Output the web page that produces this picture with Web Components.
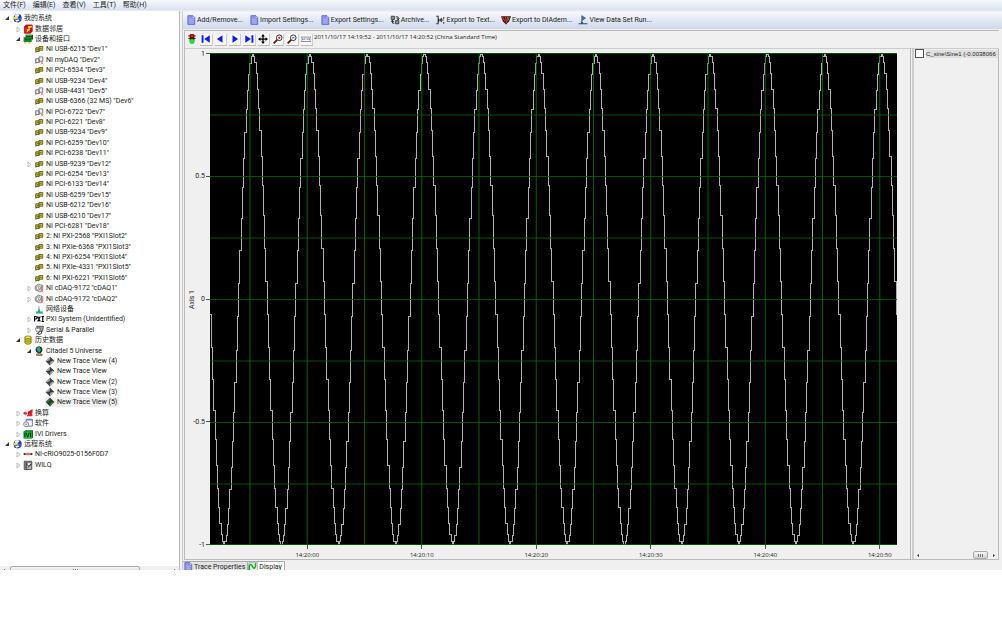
<!DOCTYPE html>
<html lang="zh-CN">
<head>
<meta charset="utf-8">
<title>Measurement &amp; Automation Explorer</title>
<style>
  body {
    margin: 0;
    background: #fff;
    color: #1c1c1c;
    font: 7px/10px Roboto, "Noto Sans CJK SC", sans-serif;
  }
</style>
</head>
<body>
<max-app></max-app>

<script>
const icons = {
  system: '<circle cx="9" cy="8" r="6.500" fill="#1a35d8"/><path d="M4 4q4-4 8-1l-2 3-4 1zM9 9l4-1 1 3-3 3z" fill="#e8f0ff"/><path d="M1 7l6-2 5 4-6 3z" fill="#f2e233"/><path d="M3 11l9-3 3 4-5 3-6-1z" fill="#2246a0"/><path d="M5 12l5-2 2 2-5 2z" fill="#fff"/>',
  neighborhood: '<path d="M2 4l4-3h9v11l-3 3H2z" fill="#7a0c10"/><path d="M2 4h10v11H2z" fill="#e8141c"/><path d="M5 1h10v11h-3V4H2z" fill="#c80f16"/><path d="M8 3h6v3h-3v4l-5 3V8h3z" fill="#ffe52e"/>',
  devices: '<path d="M4 1h12v8H4z" fill="#0c5c1e"/><path d="M1 5h13v8H1z" fill="#168c32"/><path d="M3 7h4v3H3zM9 7h3v3H9z" fill="#0a4c1a"/><path d="M2 13h3v2H2zM8 13h4v2H8z" fill="#d8c848"/><path d="M5 2h9v1H5z" fill="#63c77a"/>',
  card: '<path d="M3 6v8M8 6v7" stroke="#555" stroke-width="1.3"/><path d="M3 6h5v6H3zM8 4h6v6H8z" fill="#cfca2c" stroke="#55551c" stroke-width="1.3"/><path d="M5 8h2v2H5zM10 6h2v2h-2z" fill="#6b6a18"/>',
  offline: '<path d="M3 6v8M8 6v7" stroke="#666" stroke-width="1.3"/><path d="M3 6h5v6H3zM8 3h6v7H8z" fill="#f2f2f2" stroke="#666" stroke-width="1.3"/><path d="M11 11l4 4M15 11l-4 4" stroke="#f46a6a" stroke-width="1.3"/>',
  chassis: '<path d="M2 5l5-3 7 2v7l-5 3-7-3z" fill="#f2f2f2" stroke="#666" stroke-width="1.2"/><circle cx="7" cy="8" r="3.500" fill="#fff" stroke="#555"/><path d="M7 6v3l3 1M12 4v7" stroke="#555" fill="none"/><path d="M11 11l4 4M15 11l-4 4" stroke="#f46a6a" stroke-width="1.3"/>',
  network: '<path d="M8 3v8" stroke="#6cb6a8" stroke-width="1.5"/><path d="M8 6l2 6h4v3H3v-3h3z" fill="#2ba76c"/><path d="M3 14h11v1H3z" fill="#42c5d8"/>',
  pxi: '<path d="M1 12V4h2q2 0 2 2t-2 2H1M6 4l4 8M10 4l-4 8M14 4v8M12 4h4M12 12h4" fill="none" stroke="#000" stroke-width="1.8"/>',
  serial: '<path d="M4 2h11l-1 8H8z" fill="#999" stroke="#444" stroke-width="1.2"/><path d="M2 5h8l-1 6H4z" fill="#eee" stroke="#555"/><path d="M8 10q1 4-4 4M12 10v3q0 2-5 2" stroke="#333" fill="none" stroke-width="1.5"/>',
  history: '<path d="M3 3v10q5 4 10 0V3z" fill="#e9d91c" stroke="#5b5405"/><ellipse cx="8" cy="3.500" rx="5" ry="2" fill="#fff475" stroke="#5b5405"/><path d="M3 7q5 3 10 0M3 10q5 3 10 0" stroke="#5b5405" fill="none"/>',
  universe: '<circle cx="8" cy="6" r="5" fill="#1730c8" stroke="#222"/><path d="M5 3l4-2 3 4-3 5-4-3z" fill="#2fb24b"/><path d="M10 2q4 4 0 9" fill="none" stroke="#111" stroke-width="1.2"/><path d="M7 11h3v2h3v2H4v-2h3z" fill="#d9b51d" stroke="#443"/>',
  trace: '<path d="M8 1l7 7-7 7-7-7z" fill="#888"/><path d="M8 1v7H1zM8 8h7l-7 7z" fill="#aaa"/><path d="M8 1l7 7H8zM1 8h7v7z" fill="#444"/><path d="M5 8h6M8 5v6" stroke="#222"/>',
  traceOpen: '<path d="M8 1l7 7-7 7-7-7z" fill="#293b2b"/><path d="M8 1v7H1zM8 8h7l-7 7z" fill="#58705b"/><path d="M5 8h6M8 5v6" stroke="#0d4e15" stroke-width="2"/>',
  scale: '<path d="M0 8l4-3v2h3v3H4v2z" fill="#c9242b"/><path d="M15 2v11H6l3-5z" fill="#ee242c"/><path d="M8 6l7-4v4l-7 4z" fill="#c9141d"/>',
  software: '<path d="M5 2h10v11H5z" fill="#fff" stroke="#4257a0" stroke-width="1.2"/><path d="M5 2h10v2H5z" fill="#5a75c8"/><circle cx="5" cy="10" r="4" fill="#f0ecf8" stroke="#75669a" stroke-width="1.3"/><circle cx="5" cy="10" r="1.200" fill="#75669a"/>',
  ivi: '<path d="M1 4l3-2h12v11l-2 2H1z" fill="#0a6e1e"/><path d="M1 4h13v11H1z" fill="#17bd3a"/><path d="M3 6v7M5 6l2.500 7 2.500-7M12 6v7" stroke="#032d0a" stroke-width="1.6" fill="none"/>',
  rio: '<path d="M0 8l3-2v1h2v2H3v1zM16 8l-3-2v1h-2v2h2v1z" fill="#222"/><path d="M5 6l3 4M8 6l-3 4M8 6l3 4M11 6l-3 4" stroke="#e5393e" stroke-width="1.3"/>',
  pc: '<path d="M2 2h12v13H2z" fill="#bbb" stroke="#444" stroke-width="1.5"/><path d="M5 3v11" stroke="#333" stroke-width="2"/><path d="M7 4h6v5H7z" fill="#eee" stroke="#444"/><path d="M8 12l5-6" stroke="#333" stroke-width="1.5"/>',
  doc: '<path d="M3 1h8l3 3v11H3z" fill="#8d96f0" stroke="#5560c4" stroke-width="1.3"/><path d="M10 1v4h4" fill="#fff" stroke="#5560c4"/><path d="M5 7h7M5 10h7M5 13h7" stroke="#b9c0fa"/>',
  archive: '<path d="M2 2h5v5H2zM9 9h5v5H9z" fill="#999" stroke="#333" stroke-width="1.4"/><path d="M9 3h4v4M11 5l2 3 2-3M7 13H4V9M2 11l2-3 2 3" fill="none" stroke="#222" stroke-width="1.4"/>',
  text: '<path d="M2 2h3v12H2M6 6v5M8 8h6M11 5L8 8l3 3M14 3v3M14 11v3" fill="none" stroke="#333" stroke-width="1.7"/>',
  diadem: '<path d="M0 2h16l-3 8-5 5-5-5z" fill="#301014"/><path d="M2 3l4 7M7 3l2 10M13 3l-3 7" stroke="#e32632" stroke-width="2"/><path d="M10 3l2 5" stroke="#32a84d" stroke-width="2"/>',
  run: '<path d="M6 1l6 4-6 4z" fill="#397fae" stroke="#264373"/><path d="M6 9v4M1 14h14M5 12h3" stroke="#264373" fill="none" stroke-width="1.7"/>',
  light: '<path d="M5 1h6v11H5zM2 3h12M2 7h12" fill="#431313" stroke="#431313" stroke-width="1.5"/><circle cx="8" cy="3" r="2.500" fill="#d91818"/><circle cx="8" cy="12" r="4" fill="#12e82b"/>',
  first: '<path d="M1 2h3v12H1zM14 2v12L5 8z" fill="#0b1df0"/>',
  prev: '<path d="M12 2v12L3 8z" fill="#0b1df0"/>',
  next: '<path d="M4 2v12l9-6z" fill="#0b1df0"/>',
  last: '<path d="M2 2v12l9-6zM12 2h3v12h-3z" fill="#0b1df0"/>',
  move: '<path d="M8 2v12M2 8h12" stroke="#000" stroke-width="2"/><path d="M8 0l3 4H5zM8 16l3-4H5zM0 8l4-3v6zM16 8l-4-3v6z"/>',
  zoomIn: '<path d="M7 9l-6 6" stroke="#641515" stroke-width="3"/><circle cx="10" cy="6" r="4.500" fill="#fff" stroke="#333" stroke-width="1.6"/><path d="M8 6h4M10 4v4" stroke="#e21717" stroke-width="1.5"/>',
  zoomOut: '<path d="M7 9l-6 6" stroke="#641515" stroke-width="3"/><circle cx="10" cy="6" r="4.500" fill="#fff" stroke="#333" stroke-width="1.6"/><path d="M8 6h4" stroke="#1734e2" stroke-width="1.5"/>',
  range: '<path d="M0 5h16v7H0z" fill="#fff" stroke="#555"/><path d="M3 7v3M13 7v3M5 8h2M9 8h2" stroke="#223b91" stroke-width="1.5"/>',
  chart: '<path d="M1 1h14v14H1z" fill="#e4f4e5" stroke="#999"/><path d="M2 14V7q2-6 5 0t5 0V2" stroke="#15a829" stroke-width="2.500" fill="none"/>'
};

class MaxElement extends HTMLElement {
  constructor() {
    super();
    this.attachShadow({ mode: 'open' });
  }

  connectedCallback() {
    this.shadowRoot.innerHTML = this.render();
  }
}

class MaxIcon extends MaxElement {
  render() {
    return `
      <style>
        :host { display: block; flex: none; width: 10px; height: 10px; }
        svg { display: block; width: 100%; height: 100%; }
      </style>
      <svg viewBox="0 0 16 16" aria-hidden="true">${icons[this.getAttribute('name')]}</svg>`;
  }
}

class MenuBar extends MaxElement {
  render() {
    return `
      <style>
        :host {
          display: flex;
          gap: 7px;
          padding: 0 3px;
          height: 11px;
          box-sizing: border-box;
          background: linear-gradient(#f6f8fc, #dae1f1);
          border-bottom: 1px solid #e9ebf0;
        }
      </style>
      <slot></slot>`;
  }
}

class MenuItem extends MaxElement {
  render() {
    return `
      <style>
        :host { display: block; }
        button { display: block; border: 0; padding: 0; background: none; font: inherit; color: inherit; white-space: nowrap; }
      </style>
      <button type="button"><slot></slot></button>`;
  }
}

class TreeView extends MaxElement {
  render() {
    return `
      <style>
        :host {
          display: grid;
          flex: 1;
          grid-auto-rows: 1fr;
          min-height: 0;
          padding: 2px 0 96px;
          box-sizing: border-box;
          background: #fff;
        }
      </style>
      <slot></slot>`;
  }
}

class TreeItem extends MaxElement {
  render() {
    const level = Number(this.getAttribute('level'));
    const state = this.getAttribute('state');
    const arrows = {
      open: '<path d="M6 2v4H2z" fill="#333"/>',
      closed: '<path d="M3 2l3 2.500-3 2.500z" fill="#fff" stroke="#bbb"/>'
    };
    return `
      <style>
        :host { display: flex; align-items: center; min-height: 0; padding-left: ${3 + level * 11}px; }
        svg { flex: none; width: 8px; height: 8px; margin-right: 1px; }
        .label { display: flex; align-items: center; height: 10px; padding-right: 2px; white-space: nowrap; border-radius: 2px; }
        .label span { margin-left: 2px; }
        :host([selected]) .label { background: #efefef; }
      </style>
      <svg viewBox="0 0 8 8" aria-hidden="true">${arrows[state] || ''}</svg>
      <div class="label">
        <max-icon name="${this.getAttribute('icon')}"></max-icon>
        <span><slot></slot></span>
      </div>`;
  }
}

class ScrollBar extends MaxElement {
  render() {
    return `
      <style>
        :host { display: flex; align-items: center; height: 8px; flex: none; background: #f0f0f0; }
        svg { flex: none; width: 7px; height: 7px; fill: #333; }
        .track { display: flex; flex: 1; height: 100%; justify-content: var(--thumb-side, flex-start); }
        .thumb {
          display: flex;
          align-items: center;
          justify-content: center;
          gap: 1px;
          box-sizing: border-box;
          width: var(--thumb, 20%);
          margin: 0 3px;
          border: 1px solid #aaa;
          border-radius: 2px;
          background: linear-gradient(#f6f6f6, #d2d2d2);
        }
        i { width: 1px; height: 3px; background: #777; }
      </style>
      <svg viewBox="0 0 7 7"><path d="M5 2v3L3 3.500z"/></svg>
      <div class="track"><div class="thumb"><i></i><i></i><i></i></div></div>
      <svg viewBox="0 0 7 7"><path d="M2 2v3l2-1.500z"/></svg>`;
  }
}

class ToolBar extends MaxElement {
  render() {
    return `
      <style>
        :host {
          display: flex;
          align-items: center;
          gap: 6px;
          height: 16px;
          padding: 0 3px;
          margin-top: 1px;
          background: linear-gradient(#f7f9fd, #e2e8f5 50%, #d1daec);
          border-bottom: 1px solid #d4d8e0;
        }
      </style>
      <slot></slot>`;
  }
}

class ToolButton extends MaxElement {
  render() {
    return `
      <style>
        :host { display: block; flex: none; }
        button { display: flex; align-items: center; gap: 1px; border: 0; padding: 0; background: none; font: inherit; color: inherit; white-space: nowrap; }
      </style>
      <button type="button"><max-icon name="${this.getAttribute('icon')}"></max-icon><span><slot></slot></span></button>`;
  }
}

class PlotTools extends MaxElement {
  render() {
    const tools = ['light', 'first', 'prev', 'next', 'last', 'move', 'zoomIn', 'zoomOut', 'range'];
    return `
      <style>
        :host { display: flex; height: 17px; border-bottom: 1px solid #ccc; background: #f0f0f0; }
        .tools { display: grid; grid-template-columns: repeat(9, 1fr); align-items: center; flex: none; width: 129px; }
        button {
          display: flex;
          justify-content: center;
          align-items: center;
          height: 12px;
          margin: 0 1px;
          padding: 0;
          border: 0;
          border-right: 1px solid #ccc;
          border-bottom: 1px solid #bbb;
          background: #f8f8f8;
        }
        button:first-child { border-color: transparent; background: none; }
        span { font: 6px/12px "Open Sans", sans-serif; white-space: nowrap; }
      </style>
      <div class="tools">
        ${tools.map((t) => `<button type="button" aria-label="${t}"><max-icon name="${t}"></max-icon></button>`).join('')}
      </div>
      <span><slot></slot></span>`;
  }
}

class TracePlot extends MaxElement {
  // one cycle every five seconds, held between samples
  tracePath() {
    const period = 57.17;
    const step = period / 46;
    let d = '';
    for (let x = 0; x <= 687; x += step) {
      const y = 246 - 245 * Math.cos((2 * Math.PI * (x - 42.3)) / period);
      d += d ? `H${x.toFixed(1)}V${y.toFixed(1)}` : `M0 262V${y.toFixed(1)}`;
    }
    return d;
  }

  render() {
    let across = '';
    let down = '';
    for (let i = 0; i <= 8; i++) {
      across += `M0 ${Math.min(i * 61.5 + 0.5, 491.5)}H687`;
    }
    for (let i = 0; i < 12; i++) {
      down += `M${40 + i * 57.25} 0V492`;
    }
    return `
      <style>
        :host {
          display: grid;
          grid-template: 1fr 14px / 13px 12px 1fr;
          flex: 1;
          min-width: 0;
          padding: 4px 13px 0 0;
          background: #f0f0f0;
        }
        .title { display: flex; align-items: center; justify-content: center; writing-mode: vertical-rl; transform: rotate(180deg); }
        .values { display: flex; flex-direction: column; justify-content: space-between; align-items: flex-end; }
        .values span { display: flex; align-items: center; gap: 1px; height: 1px; white-space: nowrap; }
        .values span::after { content: ""; width: 4px; height: 1px; background: #555; }
        svg { display: block; width: 100%; height: 100%; min-height: 0; background: #000; }
        path { fill: none; vector-effect: non-scaling-stroke; }
        .plot { min-width: 0; min-height: 0; display: grid; }
        .times { grid-column: 3; display: grid; grid-template-columns: repeat(6, 1fr); margin: 0 -40px 0 40px; }
        .times span { display: flex; flex-direction: column; align-items: center; gap: 1px; font: 6px/10px "Open Sans", sans-serif; }
        .times span::before { content: ""; width: 1px; height: 4px; background: #555; }
      </style>
      <div class="title">Axis 1</div>
      <div class="values"><span>1</span><span>0.5</span><span>0</span><span>-0.5</span><span>-1</span></div>
      <div class="plot">
        <svg viewBox="0 0 687 492" preserveAspectRatio="none" role="img" aria-label="Sine1">
          <path d="${this.tracePath()}" stroke="#b0b0b0" shape-rendering="crispEdges"/>
          <path d="${across}" stroke="#005c00" stroke-opacity=".9"/>
          <path d="${down}" stroke="#006a00" stroke-opacity=".9"/>
        </svg>
      </div>
      <div class="times"><span>14:20:00</span><span>14:20:10</span><span>14:20:20</span><span>14:20:30</span><span>14:20:40</span><span>14:20:50</span></div>`;
  }
}

class TraceLegend extends MaxElement {
  render() {
    return `
      <style>
        :host {
          display: flex;
          flex-direction: column;
          justify-content: space-between;
          width: 84px;
          flex: none;
          overflow: hidden;
          border-left: 2px solid #ccc;
          border-right: 1px solid #bbb;
          background: #f0f0f0;
          --thumb: 15px;
          --thumb-side: flex-end;
        }
        label { display: flex; align-items: center; height: 9px; gap: 2px; white-space: nowrap; font: 6px/8px "Liberation Sans", sans-serif; }
        input { appearance: none; box-sizing: border-box; flex: none; width: 9px; height: 9px; margin: 0 0 0 1px; border: 1px solid #555; background: #fff; }
        span { flex: 1; background: #e0e0e0; }
      </style>
      <label><input type="checkbox"><span><slot></slot></span></label>
      <scroll-bar></scroll-bar>`;
  }
}

class TabStrip extends MaxElement {
  render() {
    return `
      <style>
        :host { display: flex; height: 9px; flex: none; overflow: hidden; }
        button {
          display: flex;
          align-items: center;
          align-self: flex-start;
          gap: 1px;
          height: 12px;
          padding: 0 2px 0 0;
          border: 1px solid #aaa;
          border-left: 0;
          background: #e3e3e3;
          font: inherit;
          color: inherit;
          white-space: nowrap;
        }
        button[aria-selected="true"] { background: #fff; }
      </style>
      <button type="button" role="tab"><max-icon name="doc"></max-icon>Trace Properties</button>
      <button type="button" role="tab" aria-selected="true"><max-icon name="chart"></max-icon>Display</button>`;
  }
}

class MaxApp extends MaxElement {
  treeItems() {
    const rows = [
      [0, 'open', 'system', '我的系统'],
      [1, 'closed', 'neighborhood', '数据邻居'],
      [1, 'open', 'devices', '设备和接口'],
      [2, '', 'card', 'NI USB-6215 "Dev1"'],
      [2, '', 'offline', 'NI myDAQ "Dev2"'],
      [2, '', 'card', 'NI PCI-6534 "Dev3"'],
      [2, '', 'card', 'NI USB-9234 "Dev4"'],
      [2, '', 'offline', 'NI USB-4431 "Dev5"'],
      [2, '', 'card', 'NI USB-6366 (32 MS) "Dev6"'],
      [2, '', 'offline', 'NI PCI-6722 "Dev7"'],
      [2, '', 'card', 'NI PCI-6221 "Dev8"'],
      [2, '', 'card', 'NI USB-9234 "Dev9"'],
      [2, '', 'card', 'NI PCI-6259 "Dev10"'],
      [2, '', 'card', 'NI PCI-6238 "Dev11"'],
      [2, 'closed', 'card', 'NI USB-9239 "Dev12"'],
      [2, '', 'card', 'NI PCI-6254 "Dev13"'],
      [2, '', 'card', 'NI PCI-6133 "Dev14"'],
      [2, '', 'card', 'NI USB-6259 "Dev15"'],
      [2, '', 'card', 'NI USB-6212 "Dev16"'],
      [2, '', 'card', 'NI USB-6210 "Dev17"'],
      [2, '', 'card', 'NI PCI-6281 "Dev18"'],
      [2, '', 'card', '2: NI PXI-2568 "PXI1Slot2"'],
      [2, '', 'card', '3: NI PXIe-6368 "PXI1Slot3"'],
      [2, '', 'card', '4: NI PXI-6254 "PXI1Slot4"'],
      [2, '', 'card', '5: NI PXIe-4331 "PXI1Slot5"'],
      [2, '', 'card', '6: NI PXI-6221 "PXI1Slot6"'],
      [2, 'closed', 'chassis', 'NI cDAQ-9172 "cDAQ1"'],
      [2, 'closed', 'chassis', 'NI cDAQ-9172 "cDAQ2"'],
      [2, '', 'network', '网络设备'],
      [2, 'closed', 'pxi', 'PXI System (Unidentified)'],
      [2, 'closed', 'serial', 'Serial &amp; Parallel'],
      [1, 'open', 'history', '历史数据'],
      [2, 'open', 'universe', 'Citadel 5 Universe'],
      [3, '', 'trace', 'New Trace View (4)'],
      [3, '', 'trace', 'New Trace View'],
      [3, '', 'trace', 'New Trace View (2)'],
      [3, '', 'trace', 'New Trace View (3)'],
      [3, '', 'traceOpen', 'New Trace View (5)'],
      [1, 'closed', 'scale', '换算'],
      [1, 'closed', 'software', '软件'],
      [1, 'closed', 'ivi', 'IVI Drivers'],
      [0, 'open', 'system', '远程系统'],
      [1, 'closed', 'rio', 'NI-cRIO9025-0156F0D7'],
      [1, 'closed', 'pc', 'WILQ']
    ];
    return rows.map(([level, state, icon, text]) =>
      `<tree-item level="${level}" state="${state}" icon="${icon}"${icon === 'traceOpen' ? ' selected' : ''}>${text}</tree-item>`
    ).join('');
  }

  render() {
    return `
      <style>
        :host { display: flex; flex-direction: column; height: calc(100vh - 53px); overflow: hidden; background: #f0f0f0; }
        .body { display: flex; flex: 1; min-height: 0; }
        .side { display: flex; flex-direction: column; flex: none; width: 179px; border-right: 1px solid #bbb; --thumb: 79%; overflow: hidden; }
        .side scroll-bar { margin-bottom: -4px; }
        .main { display: flex; flex-direction: column; flex: 1; min-width: 0; margin-left: 2px; border-left: 1px solid #ccc; }
        .panel { display: flex; flex-direction: column; flex: 1; min-height: 0; margin: 1px 3px 1px 1px; border: 1px solid #bbb; border-right: 0; }
        .content { display: flex; flex: 1; min-height: 0; }
        trace-plot { border-right: 1px solid #bbb; margin-right: 1px; }
      </style>
      <menu-bar>
        <menu-item>文件(F)</menu-item>
        <menu-item>编辑(E)</menu-item>
        <menu-item>查看(V)</menu-item>
        <menu-item>工具(T)</menu-item>
        <menu-item>帮助(H)</menu-item>
      </menu-bar>
      <div class="body">
        <div class="side">
          <tree-view>${this.treeItems()}</tree-view>
          <scroll-bar></scroll-bar>
        </div>
        <div class="main">
          <tool-bar>
            <tool-button icon="doc">Add/Remove...</tool-button>
            <tool-button icon="doc">Import Settings...</tool-button>
            <tool-button icon="doc">Export Settings...</tool-button>
            <tool-button icon="archive">Archive...</tool-button>
            <tool-button icon="text">Export to Text...</tool-button>
            <tool-button icon="diadem">Export to DIAdem...</tool-button>
            <tool-button icon="run">View Data Set Run...</tool-button>
          </tool-bar>
          <div class="panel">
            <plot-tools>2011/10/17 14:19:52 - 2011/10/17 14:20:52 (China Standard Time)</plot-tools>
            <div class="content">
              <trace-plot></trace-plot>
              <trace-legend>C_sine\\Sine1 (-0.0038066</trace-legend>
            </div>
          </div>
          <tab-strip></tab-strip>
        </div>
      </div>`;
  }
}

customElements.define('max-icon', MaxIcon);
customElements.define('menu-bar', MenuBar);
customElements.define('menu-item', MenuItem);
customElements.define('tree-view', TreeView);
customElements.define('tree-item', TreeItem);
customElements.define('scroll-bar', ScrollBar);
customElements.define('tool-bar', ToolBar);
customElements.define('tool-button', ToolButton);
customElements.define('plot-tools', PlotTools);
customElements.define('trace-plot', TracePlot);
customElements.define('trace-legend', TraceLegend);
customElements.define('tab-strip', TabStrip);
customElements.define('max-app', MaxApp);
</script>
</body>
</html>
